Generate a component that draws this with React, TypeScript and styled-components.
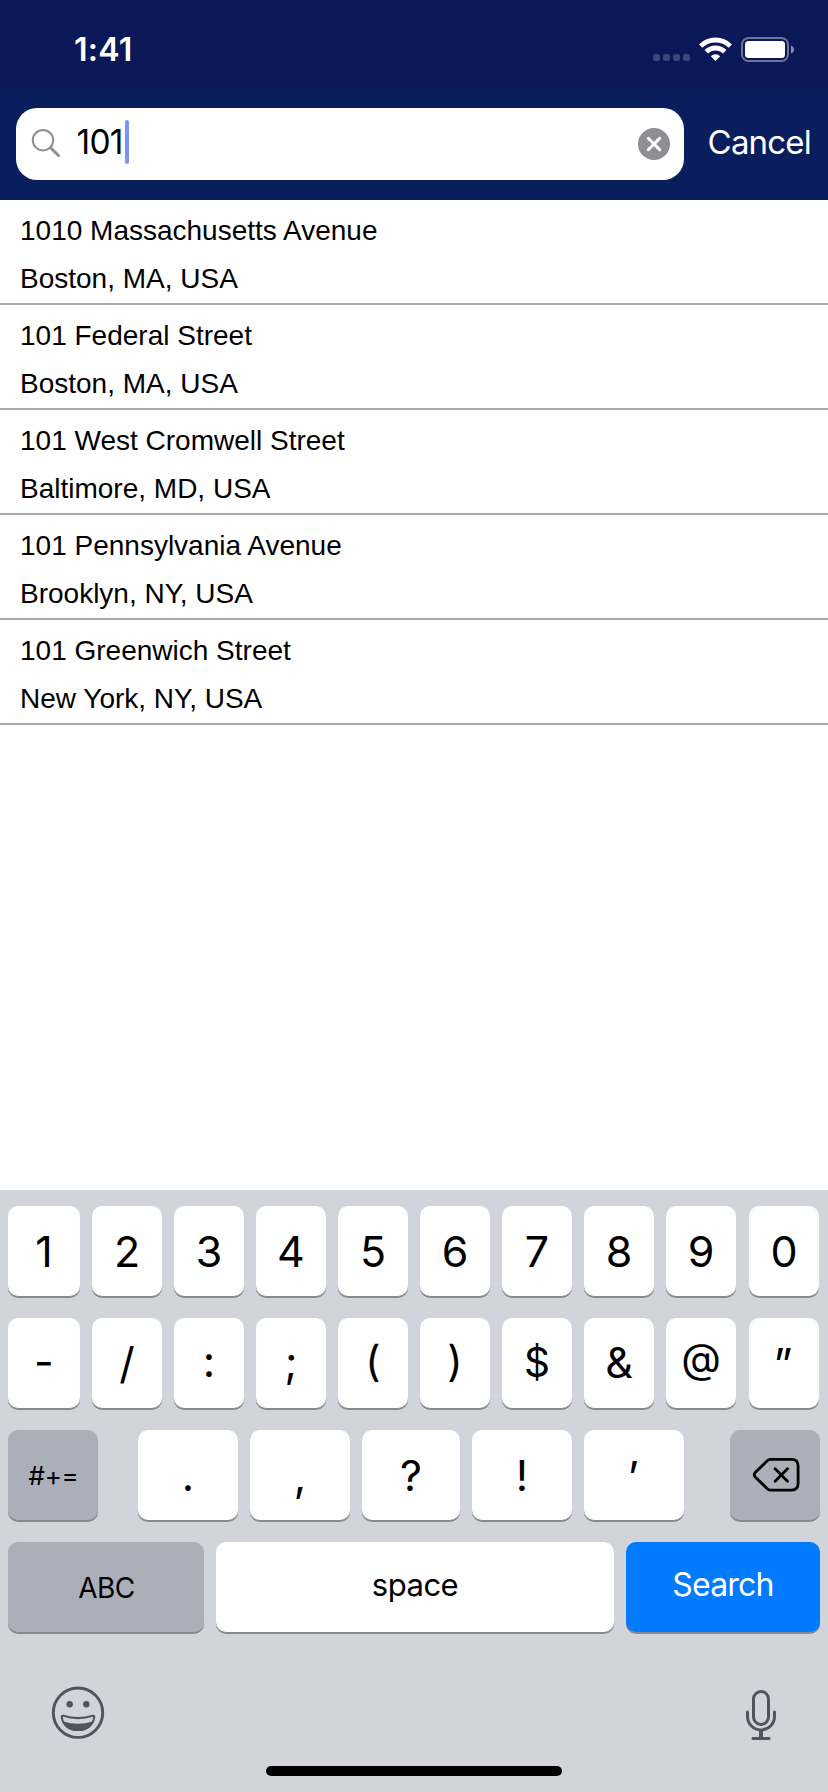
import React from "react";
import styled, { createGlobalStyle } from "styled-components";

const GlobalStyle = createGlobalStyle`
  *, *::before, *::after { box-sizing: border-box; }
  body { margin: 0; background: #fff; }
  button { appearance: none; border: 0; margin: 0; padding: 0; background: none; font: inherit; color: inherit; }
`;

const Screen = styled.div`
  width: 828px;
  height: 1792px;
  display: flex;
  flex-direction: column;
  background: #fff;
  color: #000;
  font-family: Inter, "Liberation Sans", sans-serif;
  overflow: hidden;
`;

const StatusBar = styled.header`
  flex: none;
  height: 88px;
  padding: 0 34px 0 74px;
  display: flex;
  justify-content: space-between;
  align-items: flex-start;
  background: #0a1857;
  color: #fff;
`;

const Clock = styled.time`
  margin-top: 30px;
  font-size: 32px;
  line-height: 39px;
  font-weight: 600;
  letter-spacing: 0.2px;
`;

const StatusIcons = styled.div`
  display: flex;
  align-items: flex-start;
  padding-top: 37px;
  svg { display: block; }
`;

const SignalDots = styled.div`
  display: flex;
  gap: 3px;
  margin: 17px 9px 0 0;
`;

const SignalDot = styled.i`
  width: 7px;
  height: 7px;
  border-radius: 2.5px;
  background: #3c4679;
`;

const WifiGlyph = styled.svg`
  margin-right: 9px;
`;

const SearchHeader = styled.div`
  flex: none;
  height: 112px;
  padding: 0 17px 0 16px;
  display: flex;
  align-items: center;
  justify-content: space-between;
  background: #0a1e5d;
`;

const SearchField = styled.div`
  width: 668px;
  height: 72px;
  padding: 0 14px 0 15px;
  display: flex;
  align-items: center;
  border-radius: 21px;
  background: #fff;
  svg { display: block; flex: none; }
`;

const Query = styled.span`
  margin: -4px 0 0 15.5px;
  font-size: 33.5px;
  line-height: 40px;
  letter-spacing: -0.7px;
`;

const Caret = styled.i`
  width: 4px;
  height: 44px;
  margin: -4px auto 0 1.8px;
  border-radius: 2px;
  background: #7a94f8;
`;

const CancelButton = styled.button`
  margin-top: -4px;
  color: #fff;
  font-size: 33px;
  line-height: 40px;
  font-weight: 400;
  letter-spacing: -0.8px;
`;

const Results = styled.ul`
  flex: 1;
  margin: 0;
  padding: 0;
  list-style: none;
`;

const ResultRow = styled.li`
  height: 105px;
  padding: 7px 20px 0;
  border-bottom: 2px solid #aaa;
  font-family: "Liberation Sans", Arial, sans-serif;
  font-size: 28px;
  line-height: 48px;
`;

const ResultLine = styled.div`
  height: 48px;
  white-space: nowrap;
`;

const Keyboard = styled.section`
  flex: none;
  height: 602px;
  padding: 16px 8px 0;
  background: #d1d4da;
`;

const KeyRow = styled.div`
  display: flex;
  gap: 12px;
  height: 90px;
  margin-bottom: 22px;
`;

type Tone = "light" | "dark" | "action";
const tones: Record<Tone, string> = { light: "#fff", dark: "#abafba", action: "#007aff" };

const Key = styled.button<{ $w: number; $tone?: Tone; $size?: number; $before?: number }>`
  flex: none;
  width: ${(p) => p.$w}px;
  height: 90px;
  margin-left: ${(p) => p.$before ?? 0}px;
  display: flex;
  align-items: center;
  justify-content: center;
  border-radius: 10px;
  background: ${(p) => tones[p.$tone ?? "light"]};
  color: ${(p) => (p.$tone === "action" ? "#fff" : "#000")};
  box-shadow: 0 2px 0 #898a8d;
  font-size: ${(p) => p.$size ?? 43}px;
  line-height: 1;
  svg { display: block; }
`;

const Legend = styled.span<{ $x?: number; $y?: number; $track?: number }>`
  display: block;
  transform: translate(${(p) => p.$x ?? 0}px, ${(p) => p.$y ?? 0}px);
  letter-spacing: ${(p) => p.$track ?? 0}px;
`;

const KeyboardFooter = styled.div`
  display: flex;
  justify-content: space-between;
  align-items: flex-start;
  height: 112px;
  padding: 32px 43px 0 43px;
  svg { display: block; }
`;

const MicGlyph = styled.svg`
  margin-top: 3px;
`;

const HomeIndicator = styled.div`
  width: 296px;
  height: 10px;
  margin: 0 auto;
  border-radius: 5px;
  background: #000;
`;

const WifiIcon = () => (
  <WifiGlyph width="33" height="25" viewBox="0 0 33 25" fill="none" stroke="#fff">
    <path d="M1.65 9.15A21 21 0 0 1 31.35 9.15" strokeWidth="4.8" />
    <path d="M7.3 14.8A13 13 0 0 1 25.7 14.8" strokeWidth="4.8" />
    <path d="M11.8 19.3A6.65 6.65 0 0 1 21.2 19.3L16.5 24Z" fill="#fff" stroke="none" />
  </WifiGlyph>
);

const BatteryIcon = () => (
  <svg width="53" height="25" viewBox="0 0 53 25" fill="none">
    <rect x="1" y="1" width="46" height="23" rx="6.5" stroke="#6c749a" strokeWidth="2" />
    <rect x="4" y="4" width="40" height="17" rx="3.5" fill="#fff" />
    <path d="M50 8.5C51.8 9 53 10.6 53 12.5S51.8 16 50 16.5Z" fill="#858bab" />
  </svg>
);

const SearchIcon = () => (
  <svg width="30" height="30" viewBox="0 0 30 30" fill="none" stroke="#8e8e93">
    <circle cx="12" cy="11.2" r="10.2" strokeWidth="2" />
    <path d="M19.4 18.5L27.5 26.5" strokeWidth="3" strokeLinecap="round" />
  </svg>
);

const ClearIcon = () => (
  <svg width="32" height="32" viewBox="0 0 32 32" fill="none">
    <circle cx="16" cy="16" r="16" fill="#8e8e93" />
    <path d="M10.3 10.3L21.7 21.7M21.7 10.3L10.3 21.7" stroke="#fff" strokeWidth="3" strokeLinecap="round" />
  </svg>
);

const DeleteIcon = () => (
  <svg width="48" height="36" viewBox="-1 -1 48 36" fill="none" stroke="#000" strokeWidth="2.8" strokeLinecap="round" strokeLinejoin="round">
    <path d="M17.6 1.4H38.6Q45.1 1.4 45.1 7.9V25.6Q45.1 32.1 38.6 32.1H17.6Q15.6 32.1 14 30.5L2.2 18.9Q0.2 16.8 2.2 14.6L14 3Q15.6 1.4 17.6 1.4Z" />
    <path d="M22.1 10.8L34.5 23.2M34.5 10.8L22.1 23.2" />
  </svg>
);

const EmojiIcon = () => (
  <svg width="54" height="54" viewBox="0 0 54 54" fill="none" stroke="#50545c">
    <circle cx="27" cy="26.7" r="24.7" strokeWidth="2.9" />
    <circle cx="18.7" cy="18.3" r="3.2" fill="#50545c" stroke="none" />
    <circle cx="35.3" cy="18.3" r="3.2" fill="#50545c" stroke="none" />
    <path d="M10.8 31.2Q10.3 29.4 12.3 29.8Q27 34.4 41.7 29.8Q43.7 29.4 43.2 31.2C42.3 39.2 36 44 27 44S11.7 39.2 10.8 31.2Z" strokeWidth="2.1" strokeLinejoin="round" />
    <path d="M11.8 35.2Q27 40.4 42.2 35.2C39.6 41.8 34 45 27 45S14.4 41.8 11.8 35.2Z" fill="#50545c" stroke="none" />
  </svg>
);

const MicIcon = () => (
  <MicGlyph width="32" height="52" viewBox="0 0 32 52" fill="none" stroke="#50545c" strokeWidth="3" strokeLinecap="round">
    <rect x="8.5" y="2.5" width="15" height="33" rx="7.5" />
    <path d="M2.5 23V27.5A13.5 13.5 0 0 0 29.5 27.5V23" />
    <path d="M16 41V48.5" strokeWidth="4" strokeLinecap="butt" />
    <path d="M8 49.500H24" />
  </MicGlyph>
);

const results = [
  ["1010 Massachusetts Avenue", "Boston, MA, USA"],
  ["101 Federal Street", "Boston, MA, USA"],
  ["101 West Cromwell Street", "Baltimore, MD, USA"],
  ["101 Pennsylvania Avenue", "Brooklyn, NY, USA"],
  ["101 Greenwich Street", "New York, NY, USA"],
];

type Glyph = { t: string; x?: number; y?: number; size?: number };

const digits: Glyph[] = "1234567890".split("").map((t) => ({ t }));
const symbols: Glyph[] = [
  { t: "-", y: -2 },
  { t: "/" },
  { t: ":", y: -2.5 },
  { t: ";", y: -2.5 },
  { t: "(", y: -2, size: 42 },
  { t: ")", y: -2, size: 42 },
  { t: "$", size: 40.5 },
  { t: "&", y: -1 },
  { t: "@", y: -5, size: 41 },
  { t: "”", x: -1 },
];
const marks: Glyph[] = [{ t: "." }, { t: "," }, { t: "?" }, { t: "!" }, { t: "’", x: -1, y: 0.5 }];

const TenKeys = ({ glyphs }: { glyphs: Glyph[] }) => (
  <KeyRow>
    {glyphs.map((g, i) => (
      <Key key={g.t} $w={i === 0 ? 72 : 70} $before={i === 9 ? 1 : 0} $size={g.size}>
        <Legend $x={g.x} $y={g.y}>{g.t}</Legend>
      </Key>
    ))}
  </KeyRow>
);

export default function App() {
  return (
    <Screen>
      <GlobalStyle />
      <StatusBar>
        <Clock>1:41</Clock>
        <StatusIcons>
          <SignalDots>
            <SignalDot /><SignalDot /><SignalDot /><SignalDot />
          </SignalDots>
          <WifiIcon />
          <BatteryIcon />
        </StatusIcons>
      </StatusBar>
      <SearchHeader>
        <SearchField>
          <SearchIcon />
          <Query>101</Query>
          <Caret />
          <ClearIcon />
        </SearchField>
        <CancelButton>Cancel</CancelButton>
      </SearchHeader>
      <Results>
        {results.map(([street, city]) => (
          <ResultRow key={street}>
            <ResultLine>{street}</ResultLine>
            <ResultLine>{city}</ResultLine>
          </ResultRow>
        ))}
      </Results>
      <Keyboard>
        <TenKeys glyphs={digits} />
        <TenKeys glyphs={symbols} />
        <KeyRow>
          <Key $w={90} $tone="dark" $size={26}><Legend $x={0.5} $y={1} $track={-0.3}>#+=</Legend></Key>
          {marks.map((g, i) => (
            <Key key={g.t} $w={i === 2 ? 98 : 100} $before={i === 0 ? 28 : 0}>
              <Legend $x={g.x} $y={g.y}>{g.t}</Legend>
            </Key>
          ))}
          <Key $w={90} $tone="dark" $before={34}><Legend $x={1}><DeleteIcon /></Legend></Key>
        </KeyRow>
        <KeyRow>
          <Key $w={196} $tone="dark" $size={28}><Legend $x={0.5} $y={1} $track={-0.6}>ABC</Legend></Key>
          <Key $w={398} $size={31}><Legend $y={-3} $track={-0.5}>space</Legend></Key>
          <Key $w={194} $tone="action" $size={32}><Legend $y={-2.5} $track={-0.8}>Search</Legend></Key>
        </KeyRow>
        <KeyboardFooter>
          <EmojiIcon />
          <MicIcon />
        </KeyboardFooter>
        <HomeIndicator />
      </Keyboard>
    </Screen>
  );
}
